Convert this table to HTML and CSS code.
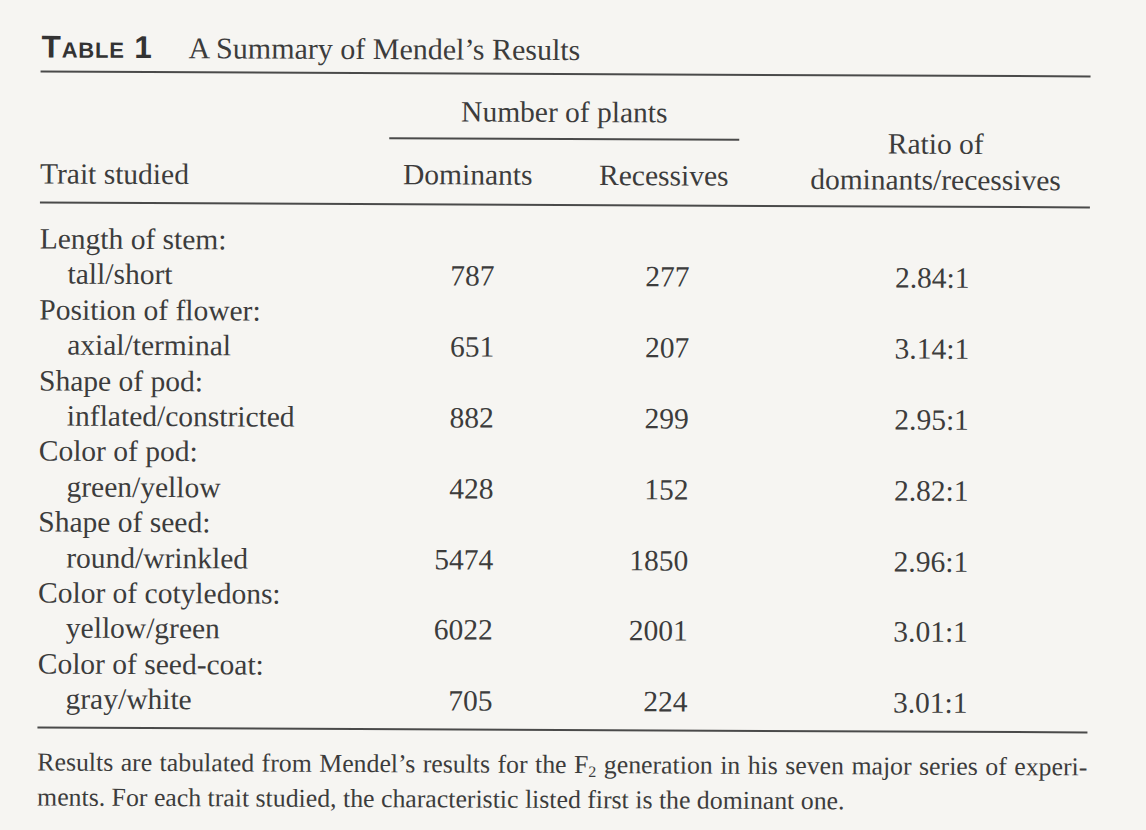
FILE: index.html
```html
<!DOCTYPE html>
<html lang="en">
<head>
<meta charset="utf-8">
<title>Table 1 – A Summary of Mendel's Results</title>
<link rel="stylesheet" href="styles.css">
</head>
<body>
<div class="page">
  <div class="title">
    <span class="label">Table 1</span>
    <span class="caption">A Summary of Mendel’s Results</span>
  </div>
  <div class="rule"></div>

  <div class="head">
    <div class="h-trait">Trait studied</div>
    <div class="h-group">Number of plants</div>
    <div class="h-dom">Dominants</div>
    <div class="h-rec">Recessives</div>
    <div class="h-ratio">Ratio of<br>dominants/recessives</div>
  </div>
  <div class="rule"></div>

  <div class="body">
    <div class="cat">Length of stem:</div>
    <div class="trait">tall/short</div><div class="num dom">787</div><div class="num rec">277</div><div class="num ratio">2.84:1</div>
    <div class="cat">Position of flower:</div>
    <div class="trait">axial/terminal</div><div class="num dom">651</div><div class="num rec">207</div><div class="num ratio">3.14:1</div>
    <div class="cat">Shape of pod:</div>
    <div class="trait">inflated/constricted</div><div class="num dom">882</div><div class="num rec">299</div><div class="num ratio">2.95:1</div>
    <div class="cat">Color of pod:</div>
    <div class="trait">green/yellow</div><div class="num dom">428</div><div class="num rec">152</div><div class="num ratio">2.82:1</div>
    <div class="cat">Shape of seed:</div>
    <div class="trait">round/wrinkled</div><div class="num dom">5474</div><div class="num rec">1850</div><div class="num ratio">2.96:1</div>
    <div class="cat">Color of cotyledons:</div>
    <div class="trait">yellow/green</div><div class="num dom">6022</div><div class="num rec">2001</div><div class="num ratio">3.01:1</div>
    <div class="cat">Color of seed-coat:</div>
    <div class="trait">gray/white</div><div class="num dom">705</div><div class="num rec">224</div><div class="num ratio">3.01:1</div>
  </div>
  <div class="rule"></div>

  <div class="note">
    <span class="line1">Results are tabulated from Mendel’s results for the F<sub>2</sub> generation in his seven major series of experi-</span>
    <span class="line2">ments. For each trait studied, the characteristic listed first is the dominant one.</span>
  </div>
</div>
</body>
</html>
```

FILE: styles.css
```css
html, body {
  margin: 0;
  padding: 0;
}

body {
  background: #f6f5f2;
  color: #3c3c3c;
  font-family: "Liberation Serif", "Times New Roman", serif;
  width: 1146px;
  height: 830px;
  overflow: hidden;
}

.page {
  width: 1050px;
  padding: 29px 0 0 39px;
  transform: rotate(0.27deg);
  transform-origin: 573px 400px;
}

.title {
  display: flex;
  align-items: baseline;
  height: 40px;
  line-height: 40px;
  margin-bottom: 4px;
}

.label {
  font-family: "Liberation Sans", Arial, sans-serif;
  font-weight: bold;
  font-variant: small-caps;
  font-size: 31.5px;
  letter-spacing: 0.8px;
  color: #333;
  margin-left: 1px;
  margin-right: 36px;
}

.caption {
  font-size: 30px;
}

.rule {
  height: 2px;
  background: #4a4a4a;
}

.head {
  display: grid;
  grid-template-columns: 349px 175px 175px 351px;
  grid-template-rows: 65px 64px;
  font-size: 29.5px;
  line-height: 36px;
}

.h-trait {
  grid-column: 1;
  grid-row: 1 / 3;
  align-self: end;
  padding-bottom: 10px;
}

.h-group {
  grid-column: 2 / 4;
  grid-row: 1;
  text-align: center;
  padding-top: 19px;
  border-bottom: 2px solid #4a4a4a;
}

.h-dom {
  grid-column: 2;
  grid-row: 2;
  padding: 17px 0 0 14px;
}

.h-rec {
  grid-column: 3;
  grid-row: 2;
  padding: 17px 0 0 35px;
}

.h-ratio {
  grid-column: 4;
  grid-row: 1 / 3;
  align-self: end;
  text-align: center;
  padding: 0 0 8px 42px;
}

.body {
  display: grid;
  grid-template-columns: 349px 175px 175px 351px;
  grid-auto-rows: 35.4px;
  align-items: center;
  padding: 18px 0 10px;
  font-size: 29.5px;
  line-height: 35.4px;
}

.cat {
  grid-column: 1 / -1;
}

.trait {
  padding-left: 28px;
}

.num {
  text-align: right;
}

.dom {
  padding-right: 69px;
}

.rec {
  padding-right: 49px;
}

.ratio {
  padding-right: 120px;
}

.note {
  margin-top: 16px;
  font-size: 25.8px;
  line-height: 35px;
}

.note span {
  display: block;
  white-space: nowrap;
}

.line1 {
  text-align: justify;
  text-align-last: justify;
}

.note sub {
  font-size: 16px;
  line-height: 0;
  vertical-align: -4px;
}
```
